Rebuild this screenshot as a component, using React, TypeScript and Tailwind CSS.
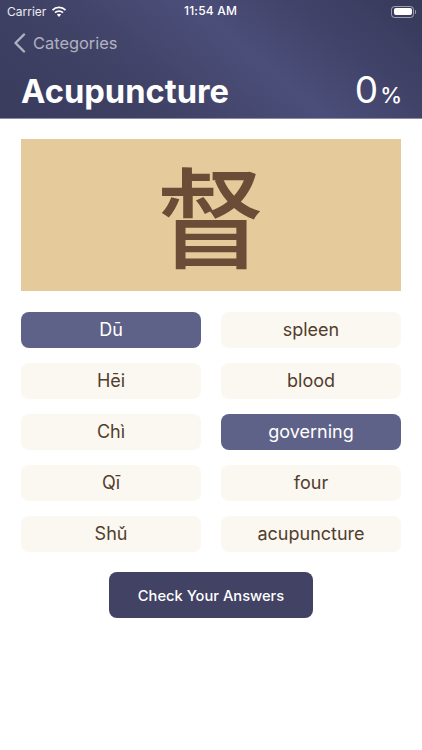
import React from "react";

const answers = [
    { label: "Dū", selected: true },
    { label: "spleen", selected: false },
    { label: "Hēi", selected: false },
    { label: "blood", selected: false },
    { label: "Chì", selected: false },
    { label: "governing", selected: true },
    { label: "Qī", selected: false },
    { label: "four", selected: false },
    { label: "Shǔ", selected: false },
    { label: "acupuncture", selected: false },
];

const WifiIcon = () => (
    <svg width="16" height="12" viewBox="0 0 16 12" fill="white">
        <path d="M8 2.3c2.3 0 4.4.9 5.9 2.4l1.2-1.2A10 10 0 0 0 8 .6 10 10 0 0 0 .9 3.5l1.2 1.2A8.400 8.400 0 0 1 8 2.300z" />
        <path d="M8 5.900c1.300 0 2.500.5 3.400 1.400l1.200-1.200A6.500 6.500 0 0 0 8 4.200a6.500 6.500 0 0 0-4.600 1.900l1.200 1.200A4.800 4.800 0 0 1 8 5.900z" />
        <path d="M8 7.800c-.8 0-1.500.3-2.100.8L8 11l2.100-2.400c-.6-.5-1.300-.8-2.100-.8z" />
    </svg>
);

const BatteryIcon = () => (
    <div className="flex items-center">
        <div className="w-[23px] h-[12px] rounded-[3.5px] border border-white/50 p-[1.5px]">
            <div className="w-full h-full rounded-[2px] bg-white" />
        </div>
        <div className="w-[1px] h-[4px] ml-[1px] rounded-r-sm bg-white/50" />
    </div>
);

export default function App() {
    return (
        <div className="w-[422px] h-[750px] bg-white font-['Inter','Noto_Sans_CJK_SC',sans-serif] overflow-hidden">
            {/* Header */}
            <div className="h-[119px] border-b border-[#8d8ea6] bg-[linear-gradient(40deg,#3a3c5e_0%,#3f4165_30%,#4b4e79_58%,#404268_78%,#37395a_100%)] flex flex-col">
                <div className="h-[23px] pl-[7px] pr-[6px] flex items-center justify-between text-white relative">
                    <div className="flex items-center gap-[5px]">
                        <span className="text-[12px] text-white/90">Carrier</span>
                        <WifiIcon />
                    </div>
                    <span className="absolute left-[184px] top-[3px] text-[12px] leading-[16px] font-medium tracking-[0.2px]">11:54 AM</span>
                    <BatteryIcon />
                </div>
                <div className="h-[40px] pl-[13px] flex items-center gap-[7px] text-white/60">
                    <svg width="13" height="20" viewBox="0 0 13 20" fill="none" stroke="currentColor" strokeWidth="2.400" strokeLinecap="round" strokeLinejoin="round">
                        <path d="M11 1.500 2.500 10l8.500 8.500" />
                    </svg>
                    <span className="text-[16.400px] leading-[22px]">Categories</span>
                </div>
                <div className="mt-[6px] pl-[21px] pr-[20px] flex items-baseline justify-between text-white">
                    <span className="text-[32.700px] leading-[41px] font-bold">Acupuncture</span>
                    <span className="text-[37px] leading-[41px]">
                        0<span className="text-[22px] font-medium ml-[2px]">%</span>
                    </span>
                </div>
            </div>

            <div className="px-[21px] pt-[20px] flex flex-col">
                {/* Character */}
                <div className="h-[152px] pb-[6px] bg-[#e5cb9b] flex items-center justify-center text-[#6b4c36] text-[109px] leading-none font-['Noto_Sans_CJK_SC',sans-serif] font-medium">
                    督
                </div>

                {/* Answers */}
                <div className="mt-[21px] grid grid-cols-2 gap-x-[20px] gap-y-[15px]">
                    {answers.map((answer) => (
                        <div
                            key={answer.label}
                            className={
                                answer.selected
                                    ? "h-[36px] pb-[1px] rounded-[8px] bg-[#5f6288] text-white text-[18px] flex items-center justify-center"
                                    : "h-[36px] pb-[1px] rounded-[8px] bg-[#fbf8f1] text-[#523d2e] text-[18px] flex items-center justify-center"
                            }
                        >
                            {answer.label}
                        </div>
                    ))}
                </div>

                {/* Submit */}
                <div className="mt-[20px] flex justify-center">
                    <button className="w-[204px] h-[46px] pt-[2px] rounded-[8px] bg-[#414264] text-white text-[14.700px] font-[450]">
                        Check Your Answers
                    </button>
                </div>
            </div>
        </div>
    );
}
